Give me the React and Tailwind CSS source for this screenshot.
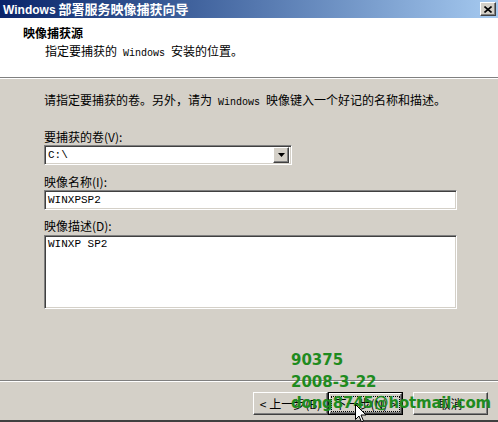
const cjk = '"Noto Sans CJK SC", "Liberation Sans", sans-serif';
const mono = '"Liberation Mono", "Noto Sans CJK SC", monospace';

const sunken =
  'border border-t-[#808080] border-l-[#808080] border-b-white border-r-white shadow-[inset_1px_1px_0_#404040,inset_-1px_-1px_0_#d4d0c8] bg-white';
const raised =
  'border border-t-white border-l-white border-b-[#404040] border-r-[#404040] shadow-[inset_-1px_-1px_0_#808080] bg-[#d4d0c8]';

function W() {
  return <span className="text-[10px]" style={{ fontFamily: mono }}> Windows </span>;
}

function Label({ children, className = '' }) {
  return <div className={`h-[14px] leading-[14px] text-[12px] ${className}`}>{children}</div>;
}

function Button({ children, focused }) {
  return (
    <div className={`w-[75px] h-[23px] ${focused ? 'border border-black' : ''}`}>
      <div className={`w-full h-full flex items-center justify-center text-[12px] ${raised}`}>
        <span className={focused ? 'outline outline-1 outline-dotted outline-black px-[2px] leading-[14px]' : 'leading-[14px]'}>
          {children}
        </span>
      </div>
    </div>
  );
}

export default function App() {
  return (
    <div className="w-[498px] h-[422px] bg-[#d4d0c8] relative overflow-hidden flex flex-col text-black" style={{ fontFamily: cjk }}>
      {/* title bar */}
      <div className="h-[18px] bg-gradient-to-r from-[#0a246a] to-[#a6caf0] flex items-center justify-between pl-[3px] pr-[2px]">
        <div className="text-white font-bold text-[13px] leading-[16px] whitespace-nowrap">
          <span className="text-[12px]" style={{ fontFamily: '"Liberation Sans", sans-serif' }}>Windows</span> 部署服务映像捕获向导
        </div>
        <div className={`w-[16px] h-[14px] flex items-center justify-center ${raised}`}>
          <svg width="8" height="7" viewBox="0 0 8 7">
            <path d="M0.5 0.5 L7.5 6.5 M7.5 0.5 L0.5 6.5" stroke="black" strokeWidth="1.6" />
          </svg>
        </div>
      </div>

      {/* header */}
      <div className="h-[59px] bg-white pt-[6px] pl-[23px]">
        <div className="font-bold text-[12px] leading-[18px]">映像捕获源</div>
        <div className="text-[12px] leading-[18px] pl-[22px]">
          指定要捕获的<W />安装的位置。
        </div>
      </div>
      <div className="h-px bg-[#808080]" />
      <div className="h-px bg-white" />

      {/* body */}
      <div className="flex-1 px-[44px] flex flex-col">
        <div className="mt-[13px] h-[16px] leading-[16px] text-[12px] whitespace-nowrap">
          请指定要捕获的卷。另外，请为<W />映像键入一个好记的名称和描述。
        </div>

        <Label className="mt-[22px]">要捕获的卷(V):</Label>
        <div className={`mt-px w-[248px] h-[20px] flex items-center ${sunken} p-[2px]`}>
          <div className="flex-1 pl-[1px] text-[11px] leading-[14px]" style={{ fontFamily: mono }}>C:\</div>
          <div className={`w-[16px] h-[16px] flex items-center justify-center ${raised}`}>
            <svg width="7" height="4" viewBox="0 0 7 4">
              <path d="M0 0 H7 L3.5 4 Z" fill="black" />
            </svg>
          </div>
        </div>

        <Label className="mt-[10px]">映像名称(I):</Label>
        <div className={`mt-px w-[413px] h-[20px] flex items-center pl-[3px] ${sunken}`}>
          <span className="text-[11px] leading-[14px]" style={{ fontFamily: mono }}>WINXPSP2</span>
        </div>

        <Label className="mt-[9px]">映像描述(D):</Label>
        <div className={`mt-[2px] w-[413px] h-[74px] pl-[3px] pt-[1px] ${sunken}`}>
          <div className="text-[11px] leading-[14px]" style={{ fontFamily: mono }}>WINXP SP2</div>
        </div>
      </div>

      {/* footer */}
      <div className="h-px bg-[#808080]" />
      <div className="h-px bg-white" />
      <div className="h-[40px] flex items-start justify-end pt-[10px] pr-[10px] border-b-2 border-[#404040]">
        <Button>&lt; 上一步(B)</Button>
        <Button focused>下一步(N) &gt;</Button>
        <div className="w-[10px]" />
        <Button>取消</Button>
      </div>

      {/* watermark overlay */}
      <div
        className="absolute left-[291px] top-[353px] text-[15px] leading-[15px] font-bold text-[#1f8b1f]"
        style={{ fontFamily: '"DejaVu Sans", sans-serif' }}
      >
        90375
      </div>
      <div
        className="absolute left-[291px] top-[375px] text-[15px] leading-[15px] font-bold text-[#1f8b1f]"
        style={{ fontFamily: '"DejaVu Sans", sans-serif' }}
      >
        2008-3-22
      </div>
      <div
        className="absolute left-[291px] top-[396px] text-[15px] leading-[15px] font-bold text-[#1f8b1f] whitespace-nowrap tracking-[-0.2px]"
        style={{ fontFamily: '"DejaVu Sans", sans-serif' }}
      >
        dong8745@hotmail.com
      </div>

      {/* mouse pointer */}
      <svg className="absolute left-[355px] top-[404px]" width="12" height="19" viewBox="0 0 12 19">
        <path d="M0.5 0.5 V15.5 L4 12 L6.5 18 L8.5 17 L6 11 H11 Z" fill="white" stroke="black" strokeWidth="1" />
      </svg>
    </div>
  );
}
